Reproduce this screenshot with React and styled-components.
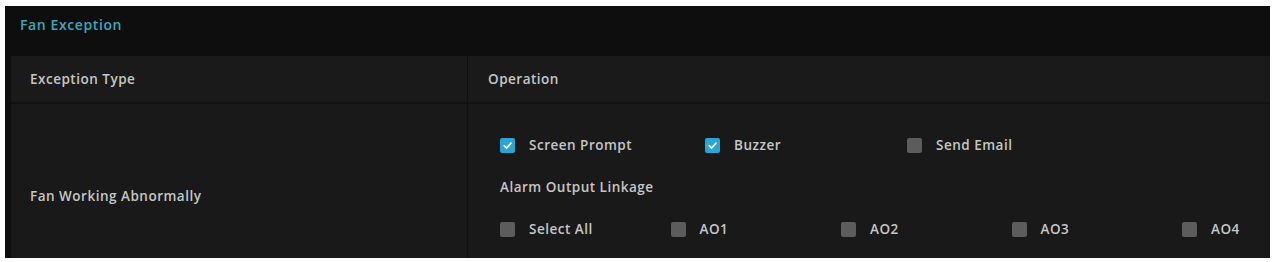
import React from "react";
import styled, { createGlobalStyle } from "styled-components";

const Global = createGlobalStyle`
  html, body { margin: 0; padding: 0; background: #ffffff; }
  body { font-family: "Open Sans", "Liberation Sans", sans-serif; }
`;

const Panel = styled.div`
  margin: 6px 0 0 5px;
  width: 1265px;
  height: 252px;
  background: #0e0e0e;
  display: flex;
  flex-direction: column;
  overflow: hidden;
`;

const TitleBar = styled.div`
  flex: none;
  height: 50px;
  display: flex;
  align-items: center;
  padding-left: 15px;
  color: #3aa8ba;
  font-size: 14px;
  font-weight: 600;
  letter-spacing: 0.6px;
  padding-bottom: 14px;
  box-sizing: border-box;
`;

const Table = styled.div`
  margin-left: 6px;
  flex: 1;
  min-height: 0;
  display: grid;
  grid-template-columns: 457px minmax(0, 1fr);
  grid-template-rows: 48px minmax(0, 1fr);
  background: #191919;
`;

const textStyle = `
  color: #c6c6c6;
  font-size: 13.5px;
  font-weight: 600;
  letter-spacing: 0.5px;
`;

const HeadCell = styled.div`
  display: flex;
  align-items: center;
  padding-left: ${(p) => p.$pad}px;
  ${textStyle}
  border-bottom: 2px solid #121212;
  border-right: ${(p) => (p.$divider ? "1px solid #111111" : "none")};
  background: #1a1a1a;
`;

const BodyCell = styled.div`
  display: flex;
  align-items: center;
  padding-left: ${(p) => p.$pad}px;
  padding-top: 30px;
  ${textStyle}
  border-right: ${(p) => (p.$divider ? "1px solid #111111" : "none")};
`;

const Ops = styled.div`
  padding: 34px 0 0 32px;
  display: flex;
  flex-direction: column;
  gap: 28px;
`;

const Row = styled.div`
  height: 14px;
  display: grid;
  grid-template-columns: ${(p) => p.$cols};
  align-items: center;
`;

const Item = styled.label`
  display: flex;
  align-items: center;
  gap: 14px;
  ${textStyle}
  height: 14px;
  white-space: nowrap;
`;

const Box = styled.span`
  width: 15px;
  height: 15px;
  border-radius: 2px;
  background: ${(p) => (p.$checked ? "#2ba4d3" : "#5c5c5c")};
  display: inline-flex;
  align-items: center;
  justify-content: center;
  flex: none;
`;

const Caption = styled.div`
  ${textStyle}
  height: 14px;
  display: flex;
  align-items: center;
`;

const Check = ({ checked, label }) => (
  <Item>
    <Box $checked={checked}>
      {checked && (
        <svg width="11" height="11" viewBox="0 0 10 10">
          <path d="M2 5.2 L4.2 7.3 L8.2 2.8" fill="none" stroke="#ffffff" strokeWidth="1.5" strokeLinecap="round" strokeLinejoin="round" />
        </svg>
      )}
    </Box>
    <span>{label}</span>
  </Item>
);

export default function App() {
  return (
    <>
      <Global />
      <Panel>
        <TitleBar>Fan Exception</TitleBar>
        <Table>
          <HeadCell $pad={19} $divider>Exception Type</HeadCell>
          <HeadCell $pad={20}>Operation</HeadCell>
          <BodyCell $pad={19} $divider>Fan Working Abnormally</BodyCell>
          <Ops>
            <Row $cols="205px 202px auto">
              <Check checked label="Screen Prompt" />
              <Check checked label="Buzzer" />
              <Check label="Send Email" />
            </Row>
            <Row $cols="auto">
              <Caption>Alarm Output Linkage</Caption>
            </Row>
            <Row $cols="170.5px 170.5px 170.5px 170.5px auto">
              <Check label="Select All" />
              <Check label="AO1" />
              <Check label="AO2" />
              <Check label="AO3" />
              <Check label="AO4" />
            </Row>
          </Ops>
        </Table>
      </Panel>
    </>
  );
}
